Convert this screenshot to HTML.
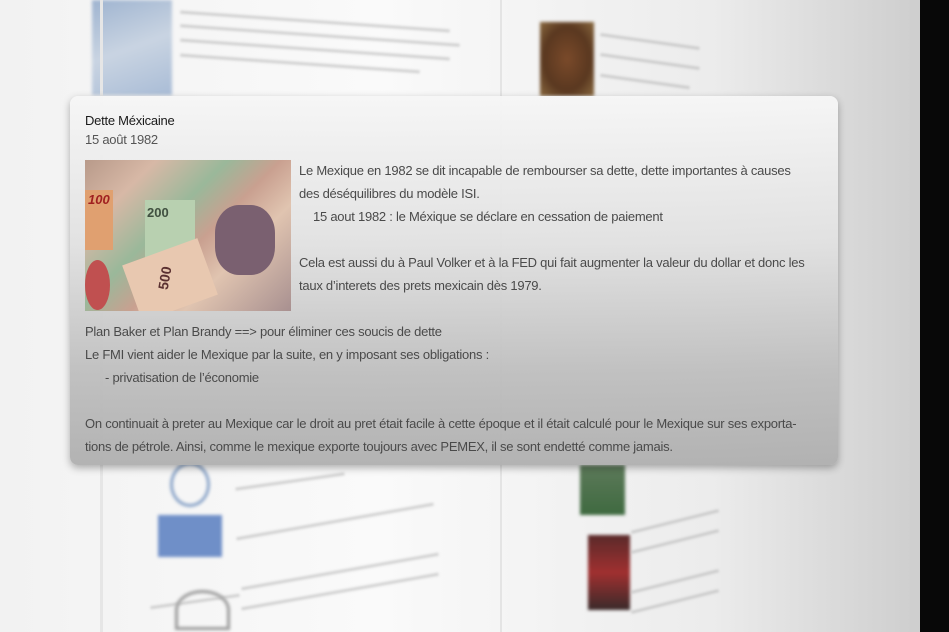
<!DOCTYPE html>
<html><head><meta charset="utf-8"><style>
*{margin:0;padding:0;box-sizing:border-box}
body{width:949px;height:632px;overflow:hidden;position:relative;background:linear-gradient(90deg,#f2f2f2 0%,#fafafa 40%,#ececec 75%,#cfcfcf 96%);font-family:"Liberation Sans",sans-serif}
.blk{position:absolute;right:0;top:0;width:29px;height:632px;background:#080808}
.bg{position:absolute;filter:blur(1.5px)}
.ln{position:absolute;height:3px;background:#aaa;filter:blur(1.2px);opacity:.5}
.card{position:absolute;left:70px;top:96px;width:768px;height:369px;border-radius:8px;background:linear-gradient(180deg,rgba(246,246,246,.97) 0%,rgba(225,225,225,.95) 40%,rgba(190,190,190,.95) 75%,rgba(176,176,176,.96) 100%);box-shadow:0 3px 8px rgba(0,0,0,.3)}
.t{position:absolute;color:#4a4a4a;font-size:13px;white-space:nowrap;letter-spacing:-.25px}
</style></head><body>
<div class="bg" style="left:92px;top:0;width:80px;height:95px;background:linear-gradient(160deg,#9fb4d0,#c9d4e2 50%,#a9bcd6)"></div>
<div class="bg" style="left:540px;top:22px;width:54px;height:74px;background:radial-gradient(#7a4a2a,#5a3820 60%,#8a6a40)"></div>
<div class="bg" style="left:170px;top:462px;width:40px;height:45px;border-radius:50%;border:3px solid #8aa4c8"></div>
<div class="bg" style="left:158px;top:515px;width:64px;height:42px;background:#6f8fc8"></div>
<div class="bg" style="left:580px;top:465px;width:45px;height:50px;background:linear-gradient(#5d7a5a,#3f6a40)"></div>
<div class="bg" style="left:588px;top:535px;width:42px;height:75px;background:linear-gradient(#5a2a2a,#a03030,#3a2a2a)"></div>
<div class="bg" style="left:175px;top:590px;width:55px;height:40px;border-radius:50% 50% 0 0;border:3px solid #999"></div>
<div class="ln" style="left:180px;top:20px;width:270px;transform:rotate(4deg)"></div>
<div class="ln" style="left:180px;top:34px;width:280px;transform:rotate(4deg)"></div>
<div class="ln" style="left:180px;top:48px;width:270px;transform:rotate(4deg)"></div>
<div class="ln" style="left:180px;top:62px;width:240px;transform:rotate(4deg)"></div>
<div class="ln" style="left:600px;top:40px;width:100px;transform:rotate(8deg)"></div>
<div class="ln" style="left:600px;top:60px;width:100px;transform:rotate(8deg)"></div>
<div class="ln" style="left:600px;top:80px;width:90px;transform:rotate(8deg)"></div>
<div class="ln" style="left:235px;top:480px;width:110px;transform:rotate(-8deg)"></div>
<div class="ln" style="left:235px;top:520px;width:200px;transform:rotate(-10deg)"></div>
<div class="ln" style="left:240px;top:570px;width:200px;transform:rotate(-10deg)"></div>
<div class="ln" style="left:240px;top:590px;width:200px;transform:rotate(-10deg)"></div>
<div class="ln" style="left:150px;top:600px;width:90px;transform:rotate(-8deg)"></div>
<div class="ln" style="left:630px;top:520px;width:90px;transform:rotate(-14deg)"></div>
<div class="ln" style="left:630px;top:540px;width:90px;transform:rotate(-14deg)"></div>
<div class="ln" style="left:630px;top:580px;width:90px;transform:rotate(-14deg)"></div>
<div class="ln" style="left:630px;top:600px;width:90px;transform:rotate(-14deg)"></div>
<div style="position:absolute;left:100px;top:0;width:3px;height:632px;background:#e6e6e6"></div>
<div style="position:absolute;left:500px;top:0;width:2px;height:632px;background:#e4e4e4"></div>
<div class="blk"></div>
<div class="card">
<div class="t" style="left:15px;top:17px;color:#1a1a1a;font-size:13px">Dette Méxicaine</div>
<div class="t" style="left:15px;top:36px;color:#555;font-size:13px">15 août 1982</div>
<div style="position:absolute;left:15px;top:64px;width:206px;height:151px;overflow:hidden;background:linear-gradient(135deg,#b89a8a 0%,#d7b8a6 20%,#9ab89a 40%,#c9a090 55%,#e0c4b0 70%,#a89090 100%)">
<div style="position:absolute;left:0;top:30px;width:28px;height:60px;background:#e0a070"></div>
<div style="position:absolute;left:3px;top:32px;font:bold italic 13px 'Liberation Sans';color:#a02020">100</div>
<div style="position:absolute;left:60px;top:40px;width:50px;height:60px;background:#b8d0b0"></div>
<div style="position:absolute;left:62px;top:45px;font:bold 13px 'Liberation Sans';color:#405040">200</div>
<div style="position:absolute;left:130px;top:45px;width:60px;height:70px;border-radius:40%;background:#7a6070"></div>
<div style="position:absolute;left:45px;top:90px;width:80px;height:60px;background:#e8c8b0;transform:rotate(-20deg)"></div>
<div style="position:absolute;left:68px;top:110px;font:bold 14px 'Liberation Sans';color:#5a3030;transform:rotate(-80deg)">500</div>
<div style="position:absolute;left:0;top:100px;width:25px;height:50px;background:#c05050;border-radius:50%"></div>
</div>
<div class="t" style="left:229px;top:67px">Le Mexique en 1982 se dit incapable de rembourser sa dette, dette importantes à causes</div>
<div class="t" style="left:229px;top:90px">des déséquilibres du modèle ISI.</div>
<div class="t" style="left:243px;top:113px">15 aout 1982 : le Méxique se déclare en cessation de paiement</div>
<div class="t" style="left:229px;top:159px">Cela est aussi du à Paul Volker et à la FED qui fait augmenter la valeur du dollar et donc les</div>
<div class="t" style="left:229px;top:182px">taux d’interets des prets mexicain dès 1979.</div>
<div class="t" style="left:15px;top:228px">Plan Baker et Plan Brandy ==&gt; pour éliminer ces soucis de dette</div>
<div class="t" style="left:15px;top:251px">Le FMI vient aider le Mexique par la suite, en y imposant ses obligations :</div>
<div class="t" style="left:35px;top:274px">- privatisation de l’économie</div>
<div class="t" style="left:15px;top:320px">On continuait à preter au Mexique car le droit au pret était facile à cette époque et il était calculé pour le Mexique sur ses exporta-</div>
<div class="t" style="left:15px;top:343px">tions de pétrole. Ainsi, comme le mexique exporte toujours avec PEMEX, il se sont endetté comme jamais.</div>
</div>
</body></html>
